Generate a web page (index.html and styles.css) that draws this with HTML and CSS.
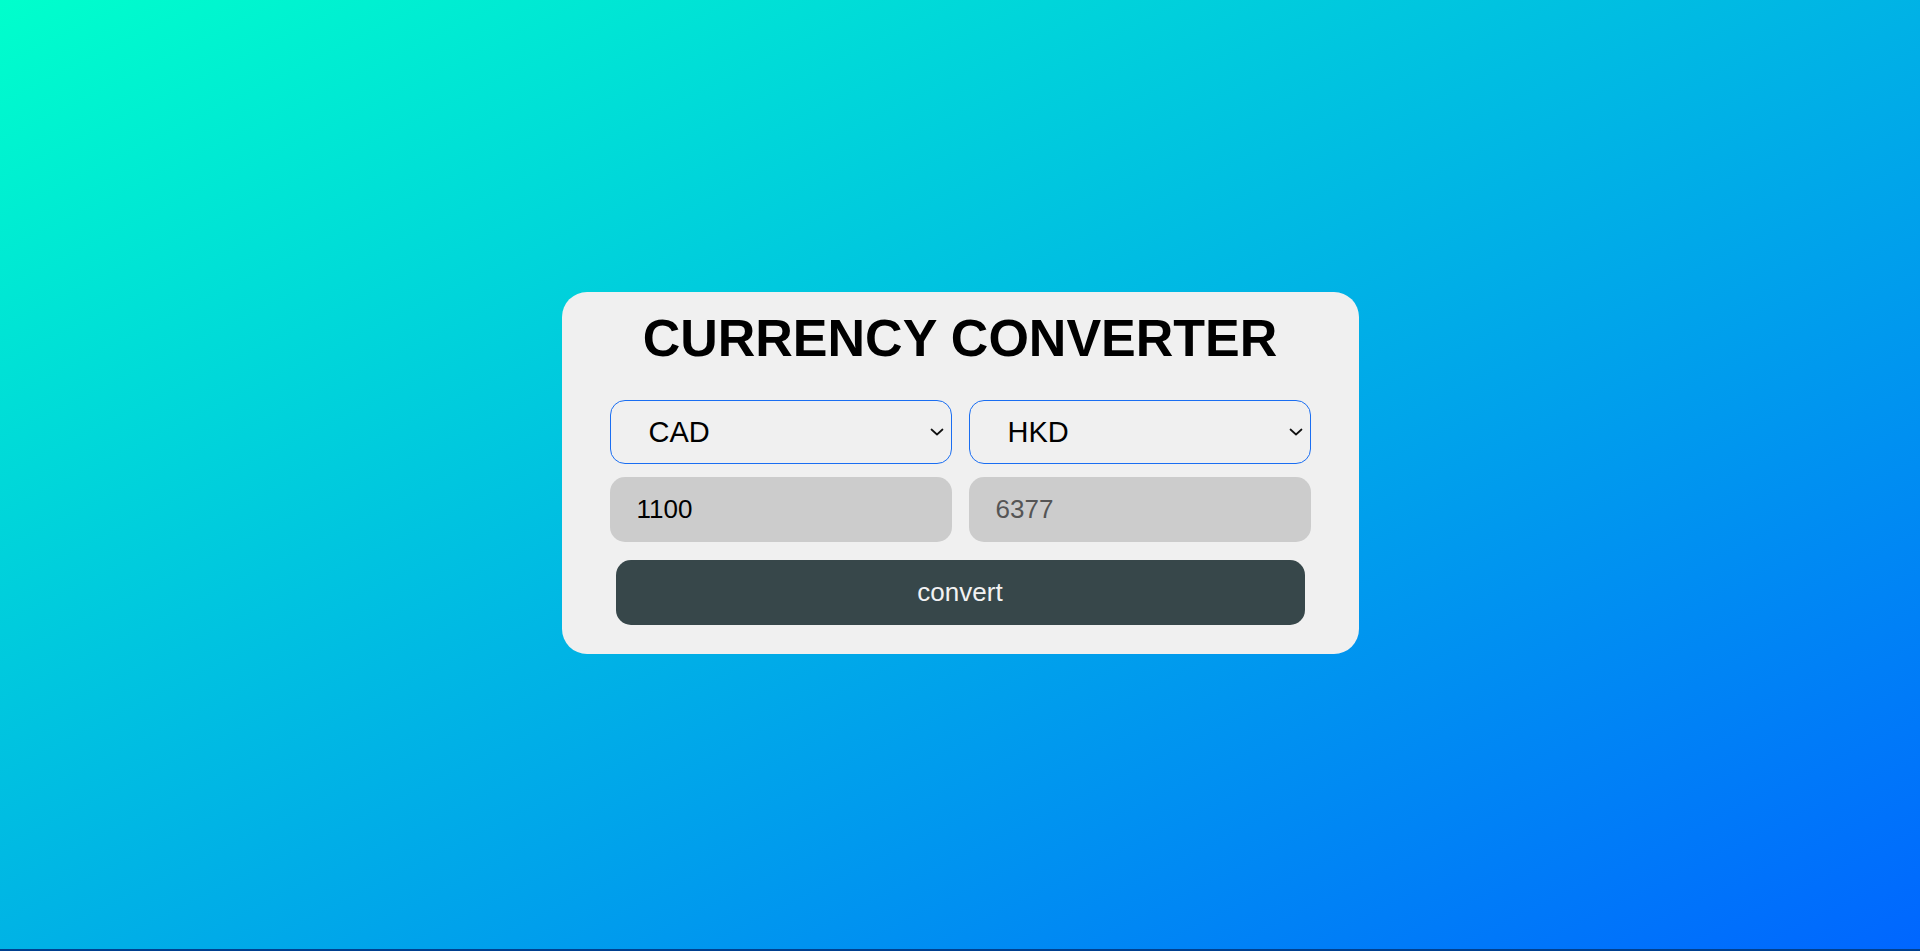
FILE: index.html
```html
<!DOCTYPE html>
<html lang="en">
<head>
<meta charset="utf-8">
<title>Currency Converter</title>
<link rel="stylesheet" href="styles.css">
</head>
<body>
<main class="card">
  <h1 class="title">CURRENCY CONVERTER</h1>
  <div class="row">
    <div class="select-wrap">
      <select class="currency">
        <option>CAD</option>
        <option>USD</option>
        <option>HKD</option>
      </select>
      <svg class="chevron" width="14" height="8" viewBox="0 0 14 8" aria-hidden="true"><path d="M1.5 1.5 L7 6.5 L12.5 1.5" fill="none" stroke="#111" stroke-width="1.7" stroke-linecap="round" stroke-linejoin="round"/></svg>
    </div>
    <div class="select-wrap">
      <select class="currency">
        <option>HKD</option>
        <option>CAD</option>
        <option>USD</option>
      </select>
      <svg class="chevron" width="14" height="8" viewBox="0 0 14 8" aria-hidden="true"><path d="M1.5 1.5 L7 6.5 L12.5 1.5" fill="none" stroke="#111" stroke-width="1.7" stroke-linecap="round" stroke-linejoin="round"/></svg>
    </div>
  </div>
  <div class="row row-inputs">
    <input class="amount" type="text" value="1100">
    <input class="amount amount-result" type="text" value="6377" readonly>
  </div>
  <button class="convert" type="button">convert</button>
</main>
</body>
</html>
```

FILE: styles.css
```css
html {
  margin: 0;
  padding: 0;
  background: #00408f;
  height: 100%;
}

body {
  margin: 0;
  height: calc(100vh - 2px);
  background: linear-gradient(to bottom right, #00ffcc, #0066ff);
  display: flex;
  align-items: center;
  justify-content: center;
  font-family: "Liberation Sans", Arial, sans-serif;
}

.card {
  width: 797px;
  box-sizing: border-box;
  background: #f0f0f0;
  border-radius: 25px;
  padding: 16px 48px 29px;
  display: flex;
  flex-direction: column;
  margin-top: -3px;
}

.title {
  margin: 0 0 32px;
  font-size: 52px;
  line-height: 60px;
  font-weight: bold;
  text-align: center;
  color: #000;
}

.row {
  display: grid;
  grid-template-columns: 1fr 1fr;
  column-gap: 17px;
}

.row-inputs {
  margin-top: 13px;
}

.select-wrap {
  position: relative;
  display: flex;
}

.currency {
  flex: 1;
  min-width: 0;
  height: 64px;
  box-sizing: border-box;
  border: 1px solid #1a6ef2;
  border-radius: 15px;
  background: #f0f0f0;
  font-family: "Liberation Sans", Arial, sans-serif;
  font-size: 29px;
  color: #000;
  padding: 0 30px 0 38px;
  outline: none;
  appearance: none;
  -webkit-appearance: none;
}

.chevron {
  position: absolute;
  right: 8px;
  top: 28px;
  pointer-events: none;
}

.amount {
  height: 65px;
  box-sizing: border-box;
  border: none;
  border-radius: 15px;
  background: #cccccc;
  font-family: "Liberation Sans", Arial, sans-serif;
  font-size: 26px;
  color: #000;
  padding: 0 27px;
  outline: none;
  min-width: 0;
}

.amount-result {
  color: #555555;
}

.convert {
  margin: 18px 6px 0;
  height: 65px;
  border: none;
  border-radius: 15px;
  background: #37474a;
  color: #f2f2f2;
  font-family: "Liberation Sans", Arial, sans-serif;
  font-size: 26px;
  cursor: pointer;
}
```
